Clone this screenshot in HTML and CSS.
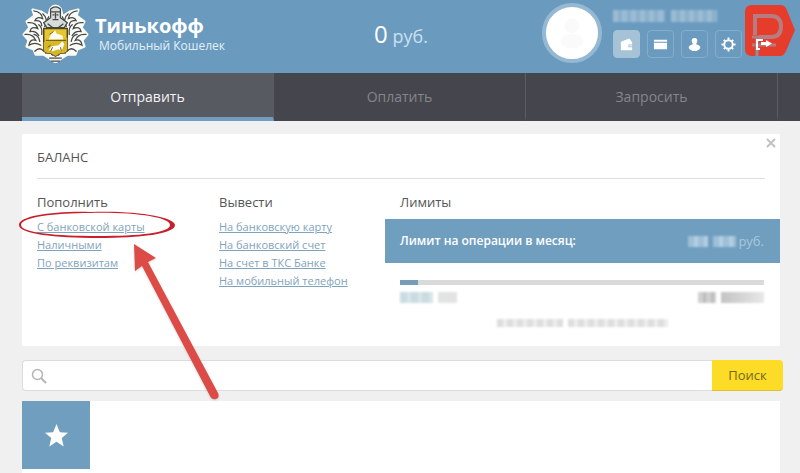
FILE: index.html
```
<!DOCTYPE html>
<html lang="ru">
<head>
<meta charset="utf-8">
<meta name="viewport" content="width=device-width, initial-scale=1">
<title>Тинькофф Мобильный Кошелек</title>
<link rel="stylesheet" href="styles.css">
</head>
<body>
<header class="header">
  <div class="brand">
    <svg class="crest" viewBox="0 0 68 60" aria-hidden="true">
      <g id="mantle" fill="#fbfbf6" stroke="#fbfbf6" stroke-width="3" stroke-linejoin="round">
        <path d="M29 5Q34-1 39 5L41 13 49 8 57 6 55 12 63 18 60 24 66 31 61 37 63 43 56 46 54 51 46 51 40 55 34 59 28 55 22 51 14 51 12 46 5 43 7 37 2 31 8 24 5 18 13 12 11 6 19 8 27 13Z"/>
      </g>
      <g fill="none" stroke="#45494a" stroke-width="1.3" stroke-linecap="round">
        <path d="M12 7Q20 8 21 15Q15 12 13 17Q20 16 20 22M6 19Q14 18 16 25Q9 22 8 28Q14 27 17 32M3 31Q11 30 14 37Q8 35 7 42Q13 38 19 42M13 48Q18 43 22 48M21 10Q27 15 23 23M17 21Q21 24 20 31M12 31Q17 32 18 38M27 13L24 20M24 50Q28 47 31 52"/>
        <path d="M56 7Q48 8 47 15Q53 12 55 17Q48 16 48 22M62 19Q54 18 52 25Q59 22 60 28Q54 27 51 32M65 31Q57 30 54 37Q60 35 61 42Q55 38 49 42M55 48Q50 43 46 48M47 10Q41 15 45 23M51 21Q47 24 48 31M56 31Q51 32 50 38M41 13L44 20M44 50Q40 47 37 52"/>
        <path d="M28 55H40M30 58H38"/>
      </g>
      <path d="M29 5Q34 1 39 5V14L46 19 43 24H25L22 19 29 14Z" fill="#d8dcda" stroke="#45494a" stroke-width="1.3"/>
      <path d="M29 8H39M31 11H33M35 11H37M34 9V15M31 16H37M26 20L31 24M42 20L37 24" stroke="#45494a" stroke-width="1.3"/>
      <path d="M22 25H46V46Q46 50 39 50L34 53 29 50Q22 50 22 46Z" fill="#e9c52d" stroke="#4c4722" stroke-width="1.5"/>
      <path d="M22 39L46 34V46Q46 50 39 50L34 53 29 50Q22 50 22 46Z" fill="#d9b625"/>
      <path d="M27 36L30 29 34 27 35 30 41 32 42 36ZM27 47L30 43 37 42 41 38 43 41 40 48 37 46 31 48Z" fill="#fffdf0"/>
      <path d="M24 37H45M28 31L32 28M26 44L29 42M31 44L29 48M39 44L40 48" fill="none" stroke="#66591c"/>
    </svg>
    <div class="brand-text">
      <strong class="brand-name">Тинькофф</strong>
      <span class="brand-sub">Мобильный Кошелек</span>
    </div>
  </div>
  <div class="sum"><span class="sum-value">0</span> руб.</div>
  <div class="user">
    <div class="avatar">
      <svg viewBox="0 0 50 50" aria-hidden="true"><g fill="#fafafa"><circle cx="25" cy="18" r="7"/><ellipse cx="25" cy="33" rx="11" ry="7"/></g></svg>
    </div>
    <div class="user-panel">
      <div class="name-mask" aria-hidden="true"><i></i><i></i></div>
      <div class="tools">
        <button class="tool tool-on" type="button" aria-label="Кошелек"><svg viewBox="0 0 16 16"><path d="M2 5L11 1.500 13 4V5H14V8H10V11H14V14H2Z"/><path d="M11 9H14V10H11Z"/></svg></button>
        <button class="tool" type="button" aria-label="Карта"><svg viewBox="0 0 16 16"><path d="M1 3H15V5H1ZM1 6H15V13H1Z"/></svg></button>
        <button class="tool" type="button" aria-label="Профиль"><svg viewBox="0 0 16 16"><circle cx="8" cy="4" r="3"/><path d="M6 6H10V8Q15 9 14 12 12 15 8 15 4 15 2 12 1 9 6 8Z"/></svg></button>
        <button class="tool" type="button" aria-label="Настройки"><svg viewBox="0 0 16 16"><circle cx="8" cy="8" r="4.500" fill="none" stroke="#fff" stroke-width="2"/><path d="M8 0.500V3M8 13V15.500M0.500 8H3M13 8H15.500M3 3L4.500 4.500M11.500 11.500L13 13M13 3L11.500 4.500M4.500 11.500L3 13" stroke="#fff" stroke-width="2"/></svg></button>
        <button class="tool tool-bare" type="button" aria-label="Выход"></button>
      </div>
    </div>
  </div>
  <svg class="badge" viewBox="0 0 52 54" aria-hidden="true">
    <path d="M8 1H36Q40 1 42 4L51 26 42 47Q40 52 36 52H8Q1 52 1 45V8Q1 1 8 1Z" fill="#e53c2b"/>
    <path d="M11 31V12H27Q37 12 37 22.500T27 33H15" fill="none" stroke="#b77c80" stroke-width="4"/>
    <path d="M13 34V52" stroke="#8f8d9c" stroke-width="3"/>
    <path d="M8 33H16M8 41H32" stroke="#b77c80" stroke-width="3"/>
    <path d="M19 36H13V45H16" fill="none" stroke="#fff" stroke-width="2"/>
    <path d="M17 38H22V36L28 39.500 22 43V41H17Z" fill="#fff"/>
  </svg>
</header>
<nav class="tabs">
  <a class="tab tab-on" href="#">Отправить</a>
  <a class="tab" href="#">Оплатить</a>
  <a class="tab" href="#">Запросить</a>
</nav>
<main class="page">
  <section class="card">
    <button class="close" type="button" aria-label="Закрыть"><svg viewBox="0 0 10 10"><path d="M1 1L9 9M9 1L1 9" stroke="#c2c2c2" stroke-width="2"/></svg></button>
    <h1 class="card-title">БАЛАНС</h1>
    <div class="columns">
      <div class="column">
        <h2>Пополнить</h2>
        <ul>
          <li><a href="#">С банковской карты</a></li>
          <li><a href="#">Наличными</a></li>
          <li><a href="#">По реквизитам</a></li>
        </ul>
        <svg class="pointer" viewBox="0 0 210 200" aria-hidden="true">
          <path fill="#c8202b" fill-rule="evenodd" d="M75 7C120 5 160 12 160 20 160 29 125 33 83 33 40 33 4 29 4 20 4 11 38 6 75 7ZM75 8C40 8 6 12 6 20 6 28 42 31 83 31 124 31 155 28 155 20 155 12 118 7 75 8Z"/>
          <path class="arrow" fill="#dd4b47" d="M119 39L141 53 133 57 203 188Q205 193 201 194 197 195 195 191L127 61 120 66Z"/>
        </svg>
      </div>
      <div class="column">
        <h2>Вывести</h2>
        <ul>
          <li><a href="#">На банковскую карту</a></li>
          <li><a href="#">На банковский счет</a></li>
          <li><a href="#">На счет в ТКС Банке</a></li>
          <li><a href="#">На мобильный телефон</a></li>
        </ul>
      </div>
      <div class="column limits">
        <h2>Лимиты</h2>
        <div class="limit-bar">
          <span class="limit-name">Лимит на операции в месяц:</span>
          <span class="limit-sum"><span class="mask mask-light" aria-hidden="true"><i></i><i></i></span>руб.</span>
        </div>
        <div class="track"><div class="fill"></div></div>
        <div class="track-labels" aria-hidden="true">
          <span class="mask mask-blue"><i></i><i></i></span>
          <span class="mask mask-gray"><i></i><i></i></span>
        </div>
        <div class="mask mask-note" aria-hidden="true"><i></i><i></i></div>
      </div>
    </div>
  </section>
  <form class="search">
    <label class="field">
      <svg viewBox="0 0 16 16" aria-hidden="true"><circle cx="6.500" cy="6.500" r="5" fill="none" stroke="#b5b5b5" stroke-width="1.500"/><path d="M10 10L15 15" stroke="#b5b5b5" stroke-width="2"/></svg>
      <input type="search" aria-label="Поиск">
    </label>
    <button class="search-button" type="button">Поиск</button>
  </form>
  <section class="list">
    <button class="favorite" type="button" aria-label="Избранное"><svg viewBox="0 0 24 24"><path d="M12 0L15.500 8.500 24 9 17.500 14.500 19.500 23.500 12 18.500 4.500 23.500 6.500 14.500 0 9 8.500 8.500Z"/></svg></button>
  </section>
</main>
</body>
</html>
```

FILE: styles.css
```
* { box-sizing: border-box; }
body {
  margin: 0;
  background: #f0f0f0;
  color: #555;
  font: 13px/18px "Open Sans", "Noto Sans", sans-serif;
  overflow: hidden;
}
button, input { font: inherit; }
button { padding: 0; border: 0; cursor: pointer; }
h1, h2, ul { margin: 0; padding: 0; font-weight: 400; }
ul { list-style: none; }
svg { display: block; }
i { display: block; }

.header {
  position: relative;
  display: grid;
  grid-template-columns: 352fr 168fr auto;
  height: 73px;
  padding: 0 24px 0 22px;
  background: #6a9bbf;
  color: #fff;
}
.brand { display: flex; gap: 6px; padding-top: 4px; }
.crest { width: 67px; height: 59px; }
.brand-text { display: flex; flex-direction: column; padding-top: 10px; }
.brand-name { font-size: 20px; line-height: 24px; font-weight: 700; }
.brand-sub { padding-left: 4px; font-size: 12px; line-height: 16px; color: #e3eff8; }
.sum { padding-top: 20px; font-size: 18px; line-height: 28px; color: #c9e0f2; }
.sum-value { font-size: 24px; font-weight: 500; color: #fff; }
.user { display: flex; gap: 11px; padding-top: 3px; }
.avatar {
  width: 60px;
  height: 60px;
  border: 4px solid #95b9d2;
  border-radius: 50%;
  background: #fff;
}
.user-panel { padding-top: 7px; }
.name-mask { display: flex; gap: 6px; height: 12px; margin-bottom: 8px; filter: blur(1px); }
.name-mask i { width: 52px; background: repeating-linear-gradient(90deg, #9bbcd4 0 5px, #8bb0cc 5px 9px); }
.name-mask i + i { width: 46px; }
.tools { display: flex; gap: 7px; }
.tool {
  display: grid;
  place-items: center;
  width: 27px;
  height: 28px;
  border: 1px solid #84adca;
  border-radius: 4px;
  background: transparent;
}
.tool-on { background: #a5c2d7; border-color: #a5c2d7; }
.tool-bare { border-color: transparent; }
.tool svg { width: 15px; height: 15px; fill: #fff; }
.badge { position: absolute; top: 4px; right: 4px; width: 52px; height: 54px; }

.tabs {
  display: grid;
  grid-template-columns: repeat(3, 1fr);
  height: 48px;
  padding: 0 22px;
  background: #44454d;
}
.tab {
  padding-top: 14px;
  border-right: 1px solid #5b5c63;
  border-bottom: 4px solid transparent;
  color: #85868b;
  font-size: 14px;
  line-height: 20px;
  text-align: center;
  text-decoration: none;
}
.tab-on { background: #585a62; border-bottom-color: #709cbd; color: #f2f2f4; }

.page { padding: 13px 20px 0 22px; }
.card { position: relative; padding-top: 14px; padding-bottom: 15px; background: #fff; }
.close { position: absolute; top: 4px; right: 4px; background: transparent; }
.close svg { width: 10px; height: 10px; }
.card-title {
  margin: 0 15px;
  padding-bottom: 12px;
  border-bottom: 1px solid #dedede;
  font-size: 13px;
  line-height: 18px;
}
.columns { display: grid; grid-template-columns: 182fr 181fr 395fr; padding-top: 14px; }
.column { position: relative; padding-left: 15px; }
.column h2 { margin-bottom: 7px; font-size: 13px; line-height: 18px; }
.column li { font-size: 11px; line-height: 18px; }
.column a { color: #7fa3bd; text-decoration: underline; }
.pointer {
  position: absolute;
  top: 12px;
  left: -7px;
  z-index: 2;
  width: 210px;
  height: 200px;
  pointer-events: none;
}
.arrow { filter: drop-shadow(0 1px 1px #9996); }

.limits h2 { margin-bottom: 8px; }
.limit-bar {
  display: flex;
  justify-content: space-between;
  align-items: center;
  height: 44px;
  margin: 0 0 17px -15px;
  padding: 0 16px 0 15px;
  background: #709ebf;
  color: #fff;
}
.limit-name { font-size: 12px; font-weight: 600; }
.limit-sum { display: flex; align-items: center; gap: 2px; color: #a9c7dc; }
.track { height: 5px; margin-right: 16px; background: #d9dbdb; }
.fill { width: 5%; height: 100%; background: #759db7; }
.track-labels { display: flex; justify-content: space-between; margin: 7px 16px 0 0; }
.mask { display: flex; gap: 5px; height: 11px; filter: blur(1px); }
.mask-light i { width: 20px; background: repeating-linear-gradient(90deg, #9dbfd7 0 6px, #b4cfe1 6px 10px); }
.mask-light i + i { width: 23px; }
.mask-blue i { width: 33px; background: repeating-linear-gradient(90deg, #c9dce2 0 7px, #d8e5e9 7px 11px); }
.mask-blue i + i { width: 19px; background: #e2e4e4; }
.mask-gray i { width: 18px; background: repeating-linear-gradient(90deg, #d0d0d0 0 5px, #bdbdbd 5px 8px); }
.mask-gray i + i { width: 43px; background: linear-gradient(90deg, #c3c3c3, #e8e8e8); }
.mask-note { width: 171px; height: 8px; margin: 16px 0 4px 97px; }
.mask-note i { width: 66px; background: repeating-linear-gradient(90deg, #dedede 0 6px, #ededed 6px 10px); }
.mask-note i + i { width: 100px; }

.search { display: flex; height: 31px; margin: 14px -3px 10px 0; }
.field {
  display: flex;
  flex: 1;
  align-items: center;
  padding-left: 8px;
  border: 1px solid #dcdcdc;
  border-right: 0;
  border-radius: 4px 0 0 4px;
  background: #fff;
}
.field svg { width: 16px; height: 16px; }
.field input { flex: 1; min-width: 0; height: 28px; border: 0; outline: 0; background: transparent; }
.search-button {
  width: 71px;
  border-bottom: 1px solid #dfbf2d;
  border-radius: 0 4px 4px 0;
  background: #fcdc27;
  color: #75671f;
}
.list { min-height: 80px; background: #fff; }
.favorite {
  display: grid;
  place-items: center;
  width: 68px;
  height: 68px;
  background: #709ebf;
}
.favorite svg { width: 23px; height: 23px; fill: #fff; }
```
